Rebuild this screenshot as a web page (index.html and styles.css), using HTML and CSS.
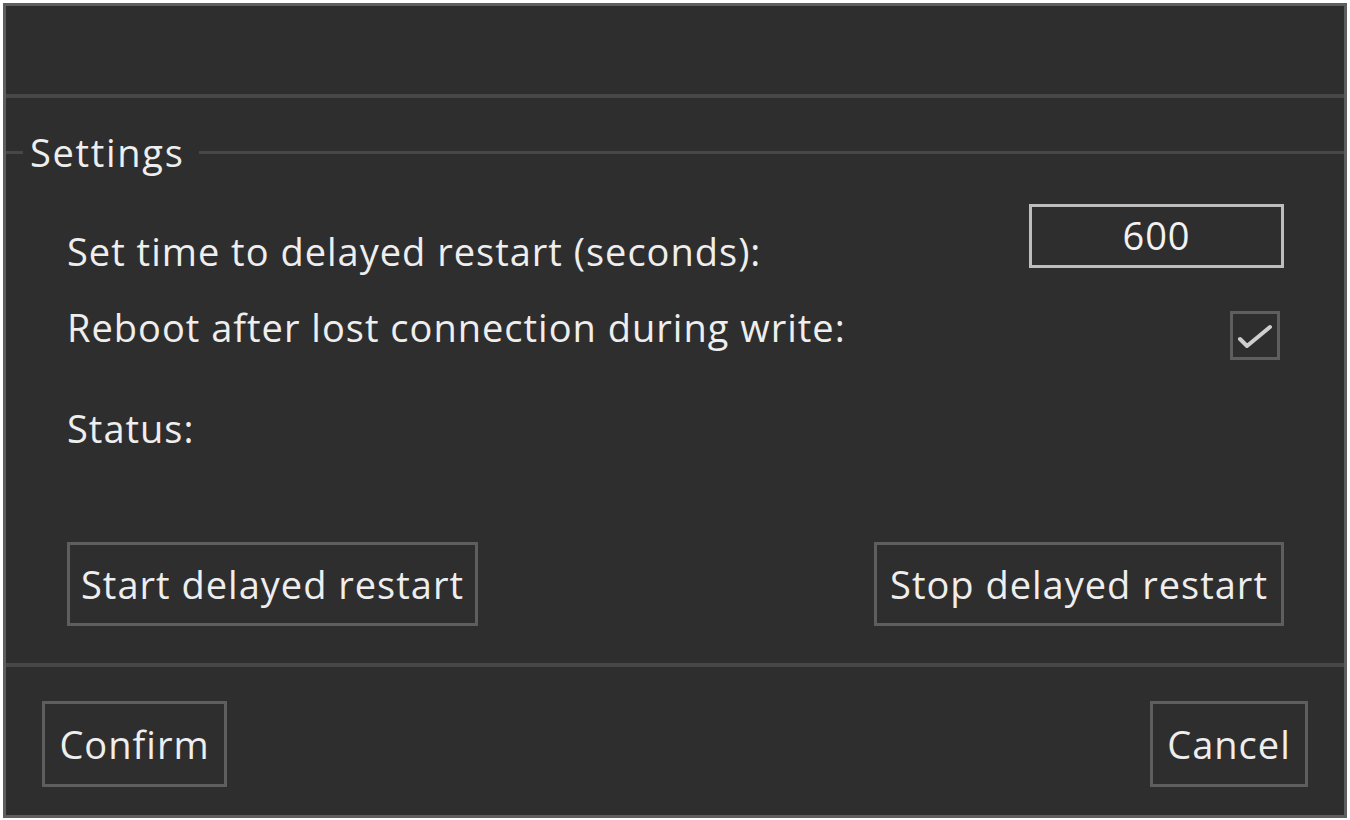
FILE: index.html
```html
<!DOCTYPE html>
<html>
<head>
<meta charset="utf-8">
<link rel="stylesheet" href="styles.css">
</head>
<body>
<div class="window">
  <div class="titlebar"></div>
  <div class="sep"></div>
  <div class="main">
    <div class="group-head">
      <span class="gline gline-left"></span>
      <span class="legend">Settings</span>
      <span class="gline gline-right"></span>
    </div>
    <div class="row row-time">
      <span class="label">Set time to delayed restart (seconds):</span>
      <div class="input">600</div>
    </div>
    <div class="row row-reboot">
      <span class="label">Reboot after lost connection during write:</span>
      <div class="checkbox">
        <svg width="44" height="43" viewBox="0 0 44 43"><path d="M7 25 L14 32 L37 13" fill="none" stroke="#cfcfcf" stroke-width="4" stroke-linecap="round" stroke-linejoin="round"/></svg>
      </div>
    </div>
    <div class="row row-status">
      <span class="label">Status:</span>
    </div>
    <div class="row row-actions">
      <button class="btn btn-start">Start delayed restart</button>
      <button class="btn btn-stop">Stop delayed restart</button>
    </div>
  </div>
  <div class="sep"></div>
  <div class="footer">
    <button class="btn btn-confirm">Confirm</button>
    <button class="btn btn-cancel">Cancel</button>
  </div>
</div>
</body>
</html>
```

FILE: styles.css
```css
html, body {
  margin: 0;
  padding: 0;
  background: #ffffff;
}
body {
  font-family: "Open Sans", Lato, sans-serif;
  font-weight: 400;
  letter-spacing: 1px;
  color: #eeeeee;
}
.window {
  box-sizing: border-box;
  margin: 3px 0 0 3px;
  width: 1344px;
  height: 815px;
  border: 3px solid #5e5e5e;
  background: #2f2e2e;
  display: flex;
  flex-direction: column;
}
.titlebar {
  height: 88px;
  flex: none;
}
.sep {
  height: 4px;
  background: #484747;
  flex: none;
}
.main {
  flex: 1;
  display: flex;
  flex-direction: column;
}
.group-head {
  display: flex;
  align-items: center;
  height: 40px;
  margin-top: 34px;
}
.gline {
  height: 3px;
  background: #484747;
}
.gline-left {
  width: 17px;
}
.gline-right {
  flex: 1;
}
.legend {
  font-size: 38px;
  line-height: 40px;
  letter-spacing: 1.7px;
  padding: 0 14px 0 7px;
}
.row {
  display: flex;
  justify-content: space-between;
  align-items: flex-start;
  padding: 0 60px 0 61px;
}
.label {
  font-size: 38px;
  line-height: 40px;
}
.row-time {
  margin-top: 32px;
  height: 64px;
}
.row-time .label {
  padding-top: 27px;
}
.input {
  box-sizing: border-box;
  width: 255px;
  height: 64px;
  border: 3px solid #bdbdbd;
  font-size: 38px;
  line-height: 56px;
  text-align: center;
  color: #f2f2f2;
}
.row-reboot {
  margin-top: 39px;
}
.checkbox {
  box-sizing: border-box;
  width: 50px;
  height: 49px;
  margin-top: 4px;
  margin-right: 4px;
  border: 3px solid #5e5e5e;
  display: flex;
  align-items: center;
  justify-content: center;
}
.row-status {
  margin-top: 48px;
}
.row-actions {
  margin-top: 94px;
}
.btn {
  box-sizing: border-box;
  background: transparent;
  border: 3px solid #5e5e5e;
  color: #eeeeee;
  font-family: "Open Sans", Lato, sans-serif;
  font-weight: 400;
  letter-spacing: 1px;
  font-size: 38px;
  padding: 0;
  margin: 0;
}
.btn-start {
  width: 411px;
  height: 84px;
}
.btn-stop {
  width: 410px;
  height: 84px;
}
.footer {
  height: 148px;
  flex: none;
  box-sizing: border-box;
  display: flex;
  justify-content: space-between;
  align-items: flex-start;
  padding: 34px 36px 0 36px;
}
.btn-confirm {
  width: 185px;
  height: 86px;
}
.btn-cancel {
  width: 158px;
  height: 86px;
}
```
